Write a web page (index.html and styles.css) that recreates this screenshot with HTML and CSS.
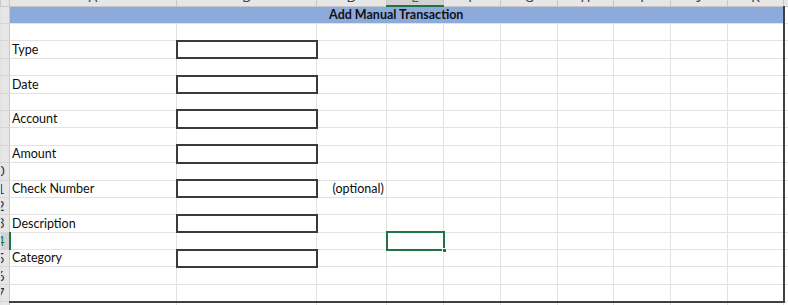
FILE: index.html
```html
<!DOCTYPE html>
<html lang="en">
<head>
<meta charset="utf-8">
<title>Add Manual Transaction</title>
<link rel="stylesheet" href="styles.css">
</head>
<body>
<table class="sheet">
  <colgroup>
    <col class="w-rh"><col class="w-a"><col class="w-b"><col class="w-d">
    <col class="w-57"><col class="w-57"><col class="w-57"><col class="w-56">
    <col class="w-57"><col class="w-57"><col class="w-56"><col class="w-rest">
  </colgroup>
  <thead>
    <tr class="colhead">
      <th class="corner"></th>
      <th><div class="ch"><span>A</span></div></th>
      <th><div class="ch"><span>B</span></div></th>
      <th><div class="ch"><span>D</span></div></th>
      <th class="sel"><div class="ch"><span>E</span></div></th>
      <th><div class="ch"><span>F</span></div></th>
      <th><div class="ch"><span>G</span></div></th>
      <th><div class="ch"><span>H</span></div></th>
      <th><div class="ch"><span>I</span></div></th>
      <th><div class="ch"><span>J</span></div></th>
      <th><div class="ch"><span>K</span></div></th>
      <th><div class="ch"><span>L</span></div></th>
    </tr>
  </thead>
  <tbody>
    <tr><th class="rh"><div class="rn"><div>1</div></div></th><td colspan="10" class="title edge-r">Add Manual Transaction</td><td></td></tr>
    <tr><th class="rh"><div class="rn"><div>2</div></div></th><td></td><td></td><td></td><td></td><td></td><td></td><td></td><td></td><td></td><td class="edge-r"></td><td></td></tr>
    <tr><th class="rh"><div class="rn"><div>3</div></div></th><td class="label">Type</td><td class="field"></td><td></td><td></td><td></td><td></td><td></td><td></td><td></td><td class="edge-r"></td><td></td></tr>
    <tr><th class="rh"><div class="rn"><div>4</div></div></th><td></td><td></td><td></td><td></td><td></td><td></td><td></td><td></td><td></td><td class="edge-r"></td><td></td></tr>
    <tr><th class="rh"><div class="rn"><div>5</div></div></th><td class="label">Date</td><td class="field"></td><td></td><td></td><td></td><td></td><td></td><td></td><td></td><td class="edge-r"></td><td></td></tr>
    <tr><th class="rh"><div class="rn"><div>6</div></div></th><td></td><td></td><td></td><td></td><td></td><td></td><td></td><td></td><td></td><td class="edge-r"></td><td></td></tr>
    <tr><th class="rh"><div class="rn"><div>7</div></div></th><td class="label">Account</td><td class="field"></td><td></td><td></td><td></td><td></td><td></td><td></td><td></td><td class="edge-r"></td><td></td></tr>
    <tr><th class="rh"><div class="rn"><div>8</div></div></th><td></td><td></td><td></td><td></td><td></td><td></td><td></td><td></td><td></td><td class="edge-r"></td><td></td></tr>
    <tr><th class="rh"><div class="rn"><div>9</div></div></th><td class="label">Amount</td><td class="field"></td><td></td><td></td><td></td><td></td><td></td><td></td><td></td><td class="edge-r"></td><td></td></tr>
    <tr><th class="rh"><div class="rn"><div>10</div></div></th><td></td><td></td><td></td><td></td><td></td><td></td><td></td><td></td><td></td><td class="edge-r"></td><td></td></tr>
    <tr><th class="rh"><div class="rn"><div>11</div></div></th><td class="label">Check Number</td><td class="field"></td><td class="note">(optional)</td><td></td><td></td><td></td><td></td><td></td><td></td><td class="edge-r"></td><td></td></tr>
    <tr><th class="rh"><div class="rn"><div>12</div></div></th><td></td><td></td><td></td><td></td><td></td><td></td><td></td><td></td><td></td><td class="edge-r"></td><td></td></tr>
    <tr><th class="rh"><div class="rn"><div>13</div></div></th><td class="label">Description</td><td class="field"></td><td></td><td></td><td></td><td></td><td></td><td></td><td></td><td class="edge-r"></td><td></td></tr>
    <tr><th class="rh sel"><div class="rn"><div>14</div></div></th><td></td><td></td><td></td><td class="active"><span class="handle"></span></td><td></td><td></td><td></td><td></td><td></td><td class="edge-r"></td><td></td></tr>
    <tr><th class="rh"><div class="rn"><div>15</div></div></th><td class="label">Category</td><td class="field"></td><td></td><td></td><td></td><td></td><td></td><td></td><td></td><td class="edge-r"></td><td></td></tr>
    <tr><th class="rh"><div class="rn"><div>16</div></div></th><td></td><td></td><td></td><td></td><td></td><td></td><td></td><td></td><td></td><td class="edge-r"></td><td></td></tr>
    <tr><th class="rh"><div class="rn"><div>17</div></div></th><td class="edge-b"></td><td class="edge-b"></td><td class="edge-b"></td><td class="edge-b"></td><td class="edge-b"></td><td class="edge-b"></td><td class="edge-b"></td><td class="edge-b"></td><td class="edge-b"></td><td class="edge-r edge-b"></td><td></td></tr>
    <tr><th class="rh"><div class="rn"><div>18</div></div></th><td></td><td></td><td></td><td></td><td></td><td></td><td></td><td></td><td></td><td></td><td></td></tr>
  </tbody>
</table>
</body>
</html>
```

FILE: styles.css
```css
* { box-sizing: border-box; }

html, body {
  margin: 0;
  padding: 0;
  background: #ffffff;
}

body {
  width: 788px;
  height: 305px;
  overflow: hidden;
  font-family: Lato, "Liberation Sans", sans-serif;
  color: #111;
}

.sheet {
  border-collapse: collapse;
  table-layout: fixed;
  width: 800px;
}

.w-rh { width: 9px; }
.w-a { width: 167px; }
.w-b { width: 140px; }
.w-d { width: 70px; }
.w-57 { width: 57px; }
.w-56 { width: 56px; }
.w-rest { width: 17px; }

.sheet td,
.sheet th {
  padding: 0;
  border: 1px solid #e2e2e2;
  font-weight: normal;
  white-space: nowrap;
  overflow: hidden;
}

/* column headers */
.colhead { height: 6px; }
.sheet .colhead th {
  height: 6px;
  background: #e6e6e6;
  border-top: none;
  border-left: 1px solid #c8c8c8;
  border-right: 1px solid #c8c8c8;
  border-bottom: 1px solid #c8c8c8;
  color: #444;
}
.sheet .colhead th.sel {
  background: #d2d2d2;
  border-bottom: 2px solid #217346;
  color: #217346;
}
.ch {
  height: 5px;
  overflow: hidden;
  display: flex;
  justify-content: center;
  align-items: flex-end;
  font-size: 13px;
}
.ch span {
  line-height: 1;
  margin-bottom: 1.5px;
}

/* body rows */
.sheet tbody tr { height: 17.4px; }

.sheet th.rh {
  background: #e6e6e6;
  border-right: 1px solid #c8c8c8;
  border-bottom: 1px solid #d6d6d6;
  color: #333;
}
.sheet th.rh.sel {
  background: #d2d2d2;
  color: #217346;
  border-right: 2px solid #217346;
}
.rn {
  width: 8px;
  overflow: hidden;
  font-size: 13px;
  line-height: 16px;
}
.rn div {
  width: 26px;
  margin-left: -17px;
  text-align: center;
}

.sheet td.title {
  background: #8eaadb;
  font-weight: bold;
  text-align: center;
  font-size: 12.5px;
  color: #111;
  border-top: none;
  vertical-align: bottom;
  line-height: 16px;
}

.sheet td.label,
.sheet td.note {
  font-size: 12.5px;
  vertical-align: bottom;
  line-height: 16px;
  padding-left: 2px;
  overflow: visible;
  color: #0d0d0d;
}
.sheet td.note { padding-left: 15px; }

.sheet td.field {
  border: 2px solid #3a3a3a;
}

.sheet td.edge-r { border-right: 2px solid #404040; }
.sheet td.edge-b { border-bottom: 2px solid #404040; }

.sheet td.active {
  position: relative;
  overflow: visible;
  border: 2px solid #217346;
}
.handle {
  position: absolute;
  right: -4px;
  bottom: -4px;
  width: 5px;
  height: 5px;
  background: #217346;
  border: 1px solid #ffffff;
}
```
